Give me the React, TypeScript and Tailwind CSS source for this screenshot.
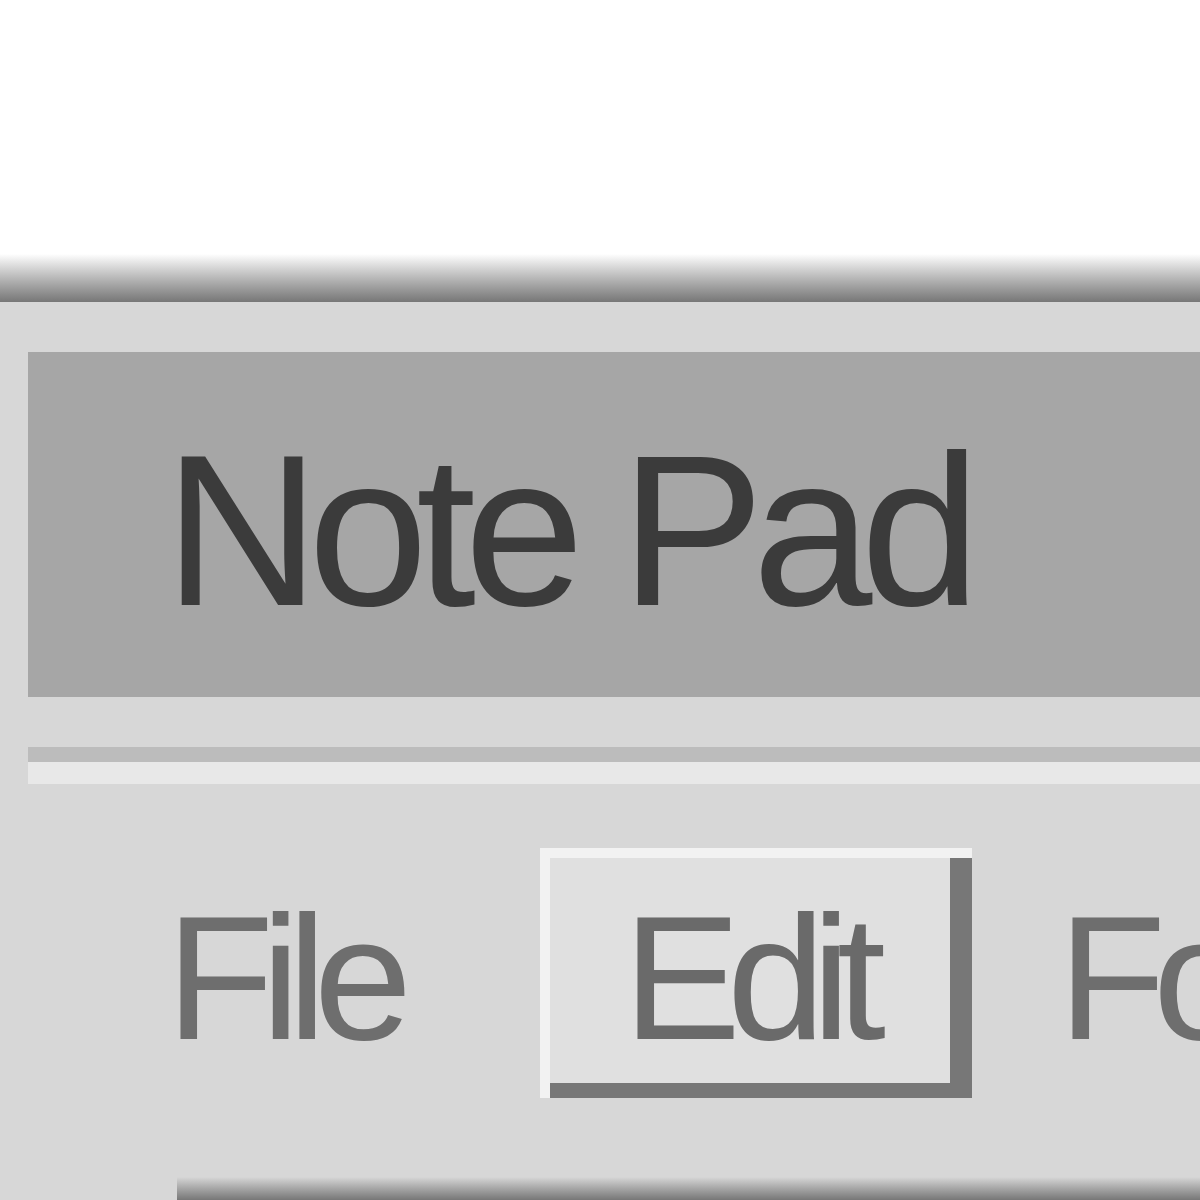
const menuItems = ["File", "Edit", "Format"];

function MenuItem({ label, active }: { label: string; active?: boolean }) {
  if (active) {
    // raised button: light edge outside, dark shadow inside
    return (
      <div className="w-[432px] shrink-0 border-t-[10px] border-l-[10px] border-[#f2f2f2]">
        <div className="border-r-[22px] border-b-[15px] border-[#777777] bg-[#e0e0e0] pt-[32px] pb-[16px] pl-[73px]">
          <span className="block text-[177px] leading-none tracking-[-14px] text-[#6a6a6a]">{label}</span>
        </div>
      </div>
    );
  }
  return (
    <span className="block mt-[42px] text-[177px] leading-none tracking-[-13px] text-[#6e6e6e] whitespace-nowrap">
      {label}
    </span>
  );
}

export default function App() {
  return (
    <div className="w-[1200px] h-[1200px] overflow-hidden bg-white flex flex-col font-['Liberation_Sans',Arial,sans-serif]">
      {/* desktop above the window */}
      <div className="h-[254px] shrink-0" />
      {/* window top edge */}
      <div className="h-[48px] shrink-0 bg-linear-to-b from-white via-[#b8b8b8] to-[#777777]" />

      {/* window body */}
      <div className="flex-1 bg-[#d7d7d7] pt-[50px] pl-[28px] flex flex-col">
        {/* title bar */}
        <div className="h-[345px] shrink-0 bg-[#a6a6a6] pt-[70px] pl-[136px]">
          <span className="block text-[216px] leading-none tracking-[-12px] text-[#3b3b3b] whitespace-nowrap">
            Note Pad
          </span>
        </div>

        {/* separator groove */}
        <div className="h-[50px] shrink-0" />
        <div className="h-[15px] shrink-0 bg-[#bcbcbc]" />
        <div className="h-[22px] shrink-0 bg-[#e8e8e8]" />

        {/* menu bar */}
        <div className="h-[393px] shrink-0 flex items-start pt-[64px] pl-[138px]">
          <div className="w-[374px] shrink-0">
            <MenuItem label={menuItems[0]} />
          </div>
          <MenuItem label={menuItems[1]} active />
          <div className="ml-[86px]">
            <MenuItem label={menuItems[2]} />
          </div>
        </div>

        {/* edit area frame */}
        <div className="ml-[149px] flex-1 bg-linear-to-b from-[#d7d7d7] to-[#777777]" />
      </div>
    </div>
  );
}
